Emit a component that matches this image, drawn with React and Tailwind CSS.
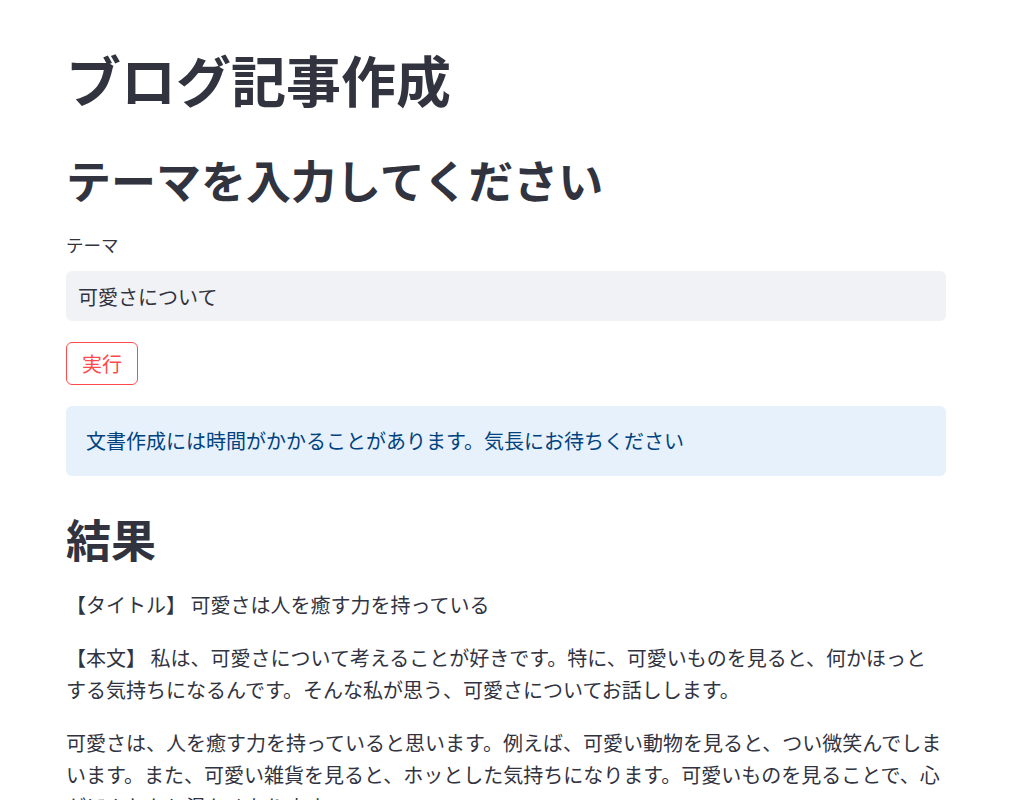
import React, { useState } from "react";

const FONT = "font-['Noto_Sans_CJK_JP','Noto_Sans',sans-serif]";

// 生成された記事（改行位置はそのまま保持）
const resultParagraphs = [
  "【タイトル】 可愛さは人を癒す力を持っている",
  "【本文】 私は、可愛さについて考えることが好きです。特に、可愛いものを見ると、何かほっと\nする気持ちになるんです。そんな私が思う、可愛さについてお話しします。",
  "可愛さは、人を癒す力を持っていると思います。例えば、可愛い動物を見ると、つい微笑んでしまいます。また、可愛い雑貨を見ると、ホッとした気持ちになります。可愛いものを見ることで、心がほんわかと温かくなります。",
  "また、可愛さは人と人とをつなぐ力も持っていると思います。可愛いものについて話すと、自然と会話がはずみます。",
];

const App = () => {
  const [theme, setTheme] = useState("可愛さについて");

  return (
    <div className={`min-h-screen bg-white text-[#31333f] ${FONT}`}>
      <div className="w-[880px] ml-[66px] pt-[45px] pb-20">
        {/* ページタイトル */}
        <h1 className="text-[55px] leading-[66px] font-bold">ブログ記事作成</h1>

        {/* 入力フォーム */}
        <h2 className="mt-[42px] text-[45px] leading-[54px] font-bold">
          テーマを入力してください
        </h2>

        <label
          htmlFor="theme"
          className="block mt-[26px] text-[17.5px] leading-[24px]"
        >
          テーマ
        </label>
        <input
          id="theme"
          type="text"
          value={theme}
          onChange={(e) => setTheme(e.target.value)}
          className="mt-[14px] block w-full h-[50px] px-3 rounded-[6px] bg-[#f0f2f6] text-[20px] text-[#31333f] outline-none"
        />

        <button
          type="button"
          className="mt-[21px] h-[43px] px-[15px] rounded-[6px] border border-[#ff4b4b] bg-white text-[20px] leading-none text-[#ff4b4b]"
        >
          実行
        </button>

        {/* お知らせ */}
        <div className="mt-[21px] h-[70px] flex items-center px-5 rounded-[6px] bg-[#e7f1fb] text-[20px] text-[#004280]">
          文書作成には時間がかかることがあります。気長にお待ちください
        </div>

        {/* 生成結果 */}
        <h2 className="mt-[36px] text-[45px] leading-[54px] font-bold">結果</h2>

        <div className="mt-[23px] flex flex-col gap-[21px] text-[20px] leading-[32px]">
          {resultParagraphs.map((p, i) => (
            <p key={i} className="whitespace-pre-line">
              {p}
            </p>
          ))}
        </div>
      </div>
    </div>
  );
};

export default App;
